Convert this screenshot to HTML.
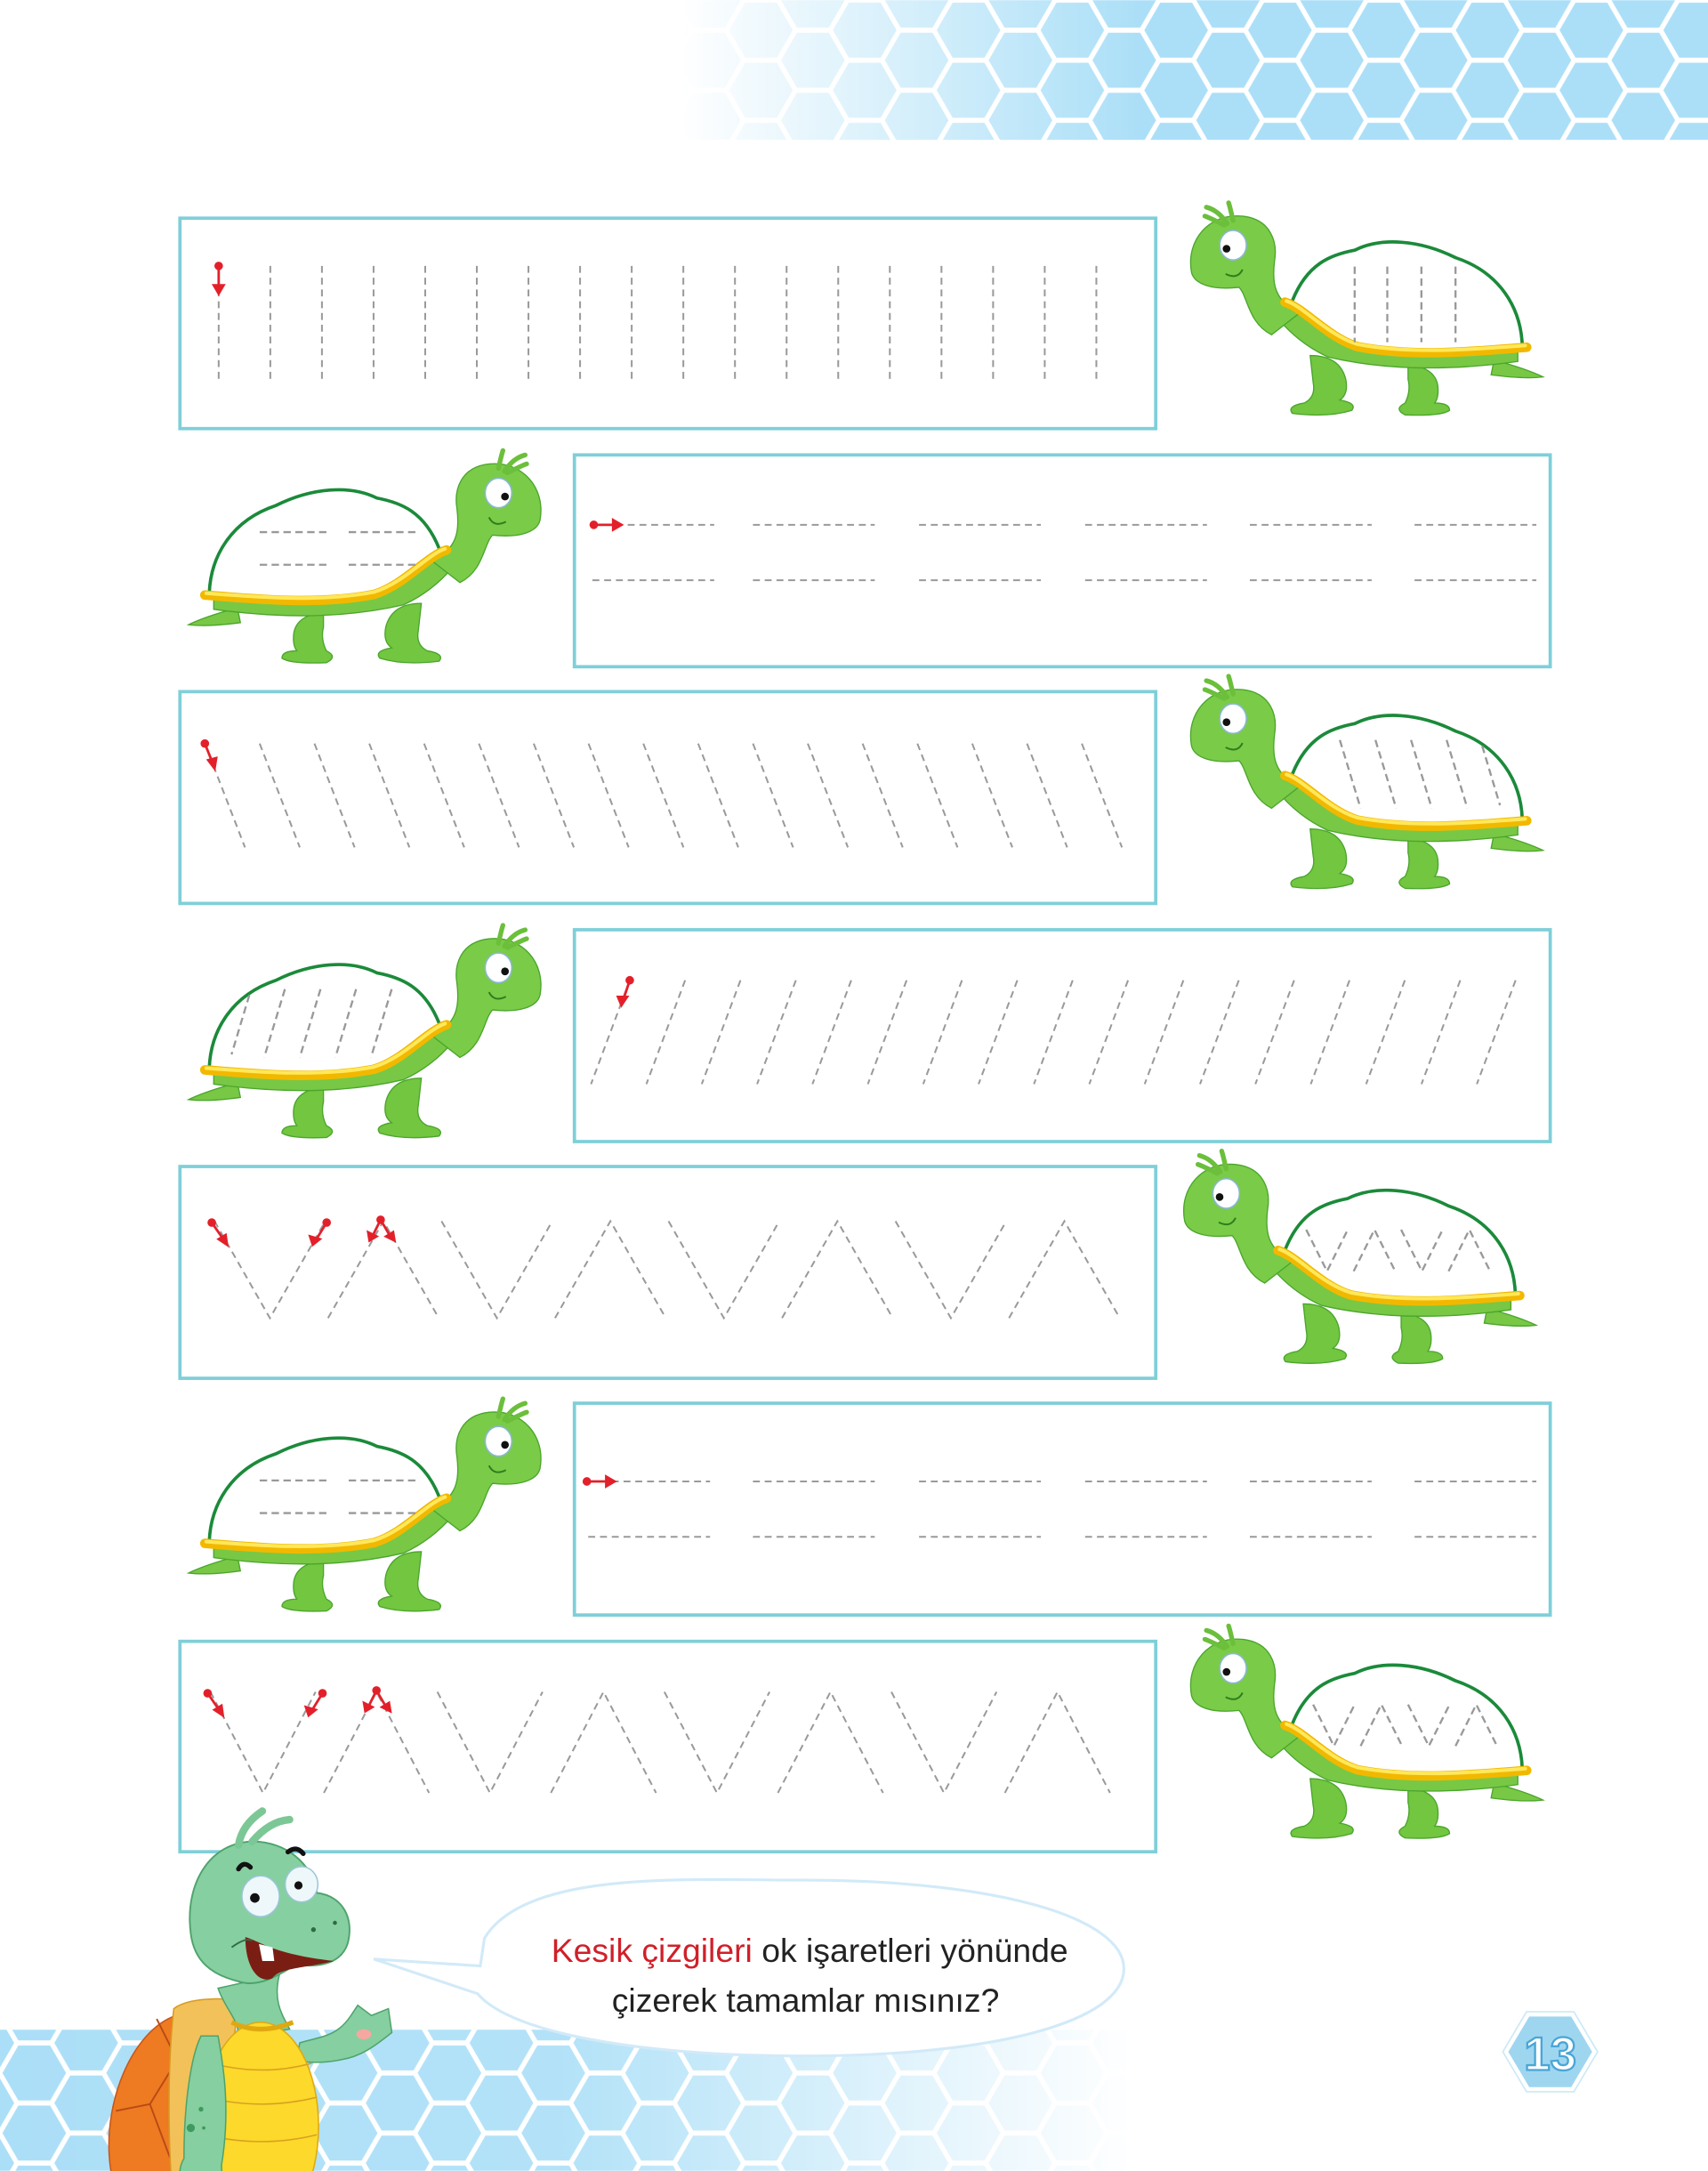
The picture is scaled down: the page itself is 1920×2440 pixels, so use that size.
<!DOCTYPE html>
<html><head><meta charset="utf-8"><style>
html,body{margin:0;padding:0;background:#fff;}
svg{display:block;}
</style></head><body>
<svg width="1920" height="2440" viewBox="0 0 1234 1568" xmlns="http://www.w3.org/2000/svg">
<defs>
<pattern id="hex" width="75" height="43.4" patternUnits="userSpaceOnUse">
<g fill="#abdff7">
<polygon points="1.75,21.7 13.25,1.8 36.25,1.8 47.75,21.7 36.25,41.6 13.25,41.6"/>
<polygon points="39.25,0 50.75,-19.9 73.75,-19.9 85.25,0 73.75,19.9 50.75,19.9"/>
<polygon points="39.25,43.4 50.75,23.5 73.75,23.5 85.25,43.4 73.75,63.3 50.75,63.3"/>
<polygon points="-35.75,0 -24.25,-19.9 -1.25,-19.9 10.25,0 -1.25,19.9 -24.25,19.9"/>
<polygon points="-35.75,43.4 -24.25,23.5 -1.25,23.5 10.25,43.4 -1.25,63.3 -24.25,63.3"/>
</g>
</pattern>
<linearGradient id="gTop" x1="0" x2="1" y1="0" y2="0">
<stop offset="0" stop-color="#fff" stop-opacity="0"/><stop offset="0.45" stop-color="#fff" stop-opacity="1"/><stop offset="1" stop-color="#fff"/>
</linearGradient>
<linearGradient id="gBot" x1="0" x2="1" y1="0" y2="0">
<stop offset="0" stop-color="#fff"/><stop offset="0.5" stop-color="#fff" stop-opacity="0.9"/><stop offset="1" stop-color="#fff" stop-opacity="0"/>
</linearGradient>
<mask id="mTop"><rect x="490" y="0" width="744" height="101" fill="url(#gTop)"/></mask>
<mask id="mBot"><rect x="0" y="1466" width="820" height="102" fill="url(#gBot)"/></mask>
<symbol id="turtle" viewBox="0 0 1320 780" overflow="visible">
<g stroke="#4aa52c" stroke-width="4">
<path d="M1080,555 Q1190,585 1245,612 Q1180,620 1070,605 Z" fill="#78c845"/>
<path d="M790,570 Q880,580 890,640 Q895,680 880,700 Q930,700 930,725 Q900,745 780,740 Q740,720 780,700 Q800,660 790,620 Z" fill="#72c640"/>
<path d="M460,540 Q560,540 580,620 Q590,670 560,690 Q620,700 600,725 Q520,750 400,735 Q380,710 440,700 Q480,680 470,630 Z" fill="#72c640"/>
<path d="M300,340 Q380,480 520,545 Q800,610 1160,560 L1160,520 L400,380 Z" fill="#78c845"/>
<path d="M60,260 C40,150 120,60 230,70 C330,80 350,160 340,220 C330,300 340,350 420,400 L330,470 C250,430 250,340 220,310 C130,320 70,300 60,260 Z" fill="#7acb47"/>
</g>
<path d="M180,95 Q150,50 110,40 M200,85 Q190,40 185,25 M170,100 Q120,75 105,70" stroke="#6bbf3b" stroke-width="16" fill="none" stroke-linecap="round"/>
<ellipse cx="200" cy="168" rx="45" ry="50" fill="#fff" stroke="#8ab8d0" stroke-width="5"/>
<circle cx="178" cy="180" r="13" fill="#111"/>
<path d="M175,265 Q215,285 232,250" stroke="#2e7d1e" stroke-width="6" fill="none"/>
<path d="M400,355 C450,230 530,200 610,185 C700,140 830,150 950,210 C1100,260 1170,380 1175,505 C1000,528 800,545 620,510 C520,480 440,380 380,360 Z" fill="#fff" stroke="#1b8a3a" stroke-width="11"/>
<path d="M375,360 C440,380 520,480 620,510 C800,545 1000,528 1190,512" stroke="#f2b800" stroke-width="32" fill="none" stroke-linecap="round"/>
<path d="M380,356 C440,376 520,472 620,502 C800,536 1000,520 1185,506" stroke="#ffe85a" stroke-width="12" fill="none" stroke-linecap="round"/>
</symbol>
</defs>

<rect x="490" y="0" width="744" height="101" fill="url(#hex)" mask="url(#mTop)"/>
<rect x="0" y="1466" width="820" height="102" fill="url(#hex)" mask="url(#mBot)"/>

<g fill="none" stroke="#7fcfd8" stroke-width="2.4">
<rect x="130" y="157.5" width="705" height="152"/>
<rect x="415" y="328.5" width="705" height="153"/>
<rect x="130" y="499.5" width="705" height="153"/>
<rect x="415" y="671.5" width="705" height="153"/>
<rect x="130" y="842.5" width="705" height="153"/>
<rect x="415" y="1013.5" width="705" height="153"/>
<rect x="130" y="1185.5" width="705" height="152"/>
</g>

<g fill="none" stroke="#9a9a9a" stroke-width="1.3" stroke-dasharray="5 3.5">
<path d="M158 192V275M195.3 192V275M232.6 192V275M269.9 192V275M307.2 192V275M344.5 192V275M381.8 192V275M419.1 192V275M456.4 192V275M493.7 192V275M531 192V275M568.3 192V275M605.6 192V275M642.9 192V275M680.2 192V275M717.5 192V275M754.8 192V275M792.1 192V275"/>
<path d="M428 379h88M544 379h88M664 379h88M784 379h88M903 379h88M1022 379h88M428 419h88M544 419h88M664 419h88M784 419h88M903 419h88M1022 419h88"/>
<path d="M148 537l29 75M187.6 537l29 75M227.2 537l29 75M266.8 537l29 75M306.4 537l29 75M346 537l29 75M385.6 537l29 75M425.2 537l29 75M464.8 537l29 75M504.4 537l29 75M544 537l29 75M583.6 537l29 75M623.2 537l29 75M662.8 537l29 75M702.4 537l29 75M742 537l29 75M781.6 537l29 75"/>
<path d="M455 708l-28 75M495 708l-28 75M535 708l-28 75M575 708l-28 75M615 708l-28 75M655 708l-28 75M695 708l-28 75M735 708l-28 75M775 708l-28 75M815 708l-28 75M855 708l-28 75M895 708l-28 75M935 708l-28 75M975 708l-28 75M1015 708l-28 75M1055 708l-28 75M1095 708l-28 75"/>
<path d="M155 882l40 70l40 -70M237 952l40 -70l40 70M319 882l40 70l40 -70M401 952l40 -70l40 70M483 882l40 70l40 -70M565 952l40 -70l40 70M647 882l40 70l40 -70M729 952l40 -70l40 70"/>
<path d="M425 1070h88M544 1070h88M664 1070h88M784 1070h88M903 1070h88M1022 1070h88M425 1110h88M544 1110h88M664 1110h88M784 1110h88M903 1110h88M1022 1110h88"/>
<path d="M152 1222l38 73l38 -73M234 1295l38 -73l38 73M316 1222l38 73l38 -73M398 1295l38 -73l38 73M480 1222l38 73l38 -73M562 1295l38 -73l38 73M644 1222l38 73l38 -73M726 1295l38 -73l38 73"/>
</g>

<g stroke="#e3202a" stroke-width="1.8" fill="#e3202a" stroke-linecap="round">
<circle cx="158" cy="192" r="2.2"/><path d="M158 192V210" fill="none"/><path d="M154.5 206L158 212L161.5 206Z"/>
<circle cx="429" cy="379" r="2.2"/><path d="M429 379H446" fill="none"/><path d="M443 375.5L449 379L443 382.5Z"/>
<circle cx="148" cy="537" r="2.2"/><path d="M148 537l6 15" fill="none"/><path d="M150.5 549l4.5 6l1.2-7.5Z"/>
<circle cx="455" cy="708" r="2.2"/><path d="M455 708l-5 15" fill="none"/><path d="M446.5 720l2.5 6l4-6Z"/>
<circle cx="153" cy="883" r="2.2"/><path d="M153 883l9 13" fill="none"/><path d="M158 895l6 4l-1-7Z"/>
<circle cx="236" cy="883" r="2.2"/><path d="M236 883l-8 13" fill="none"/><path d="M224 893l2 6l5-4Z"/>
<circle cx="275" cy="881" r="2.2"/><path d="M275 881l-6 12M275 881l7 12" fill="none"/><path d="M266 890l1 6l5-3Z"/><path d="M279 893l6 3l-1-6Z"/>
<circle cx="424" cy="1070" r="2.2"/><path d="M424 1070H441" fill="none"/><path d="M438 1066.5L444 1070L438 1073.5Z"/>
<circle cx="150" cy="1223" r="2.2"/><path d="M150 1223l9 13" fill="none"/><path d="M155 1235l6 4l-1-7Z"/>
<circle cx="233" cy="1223" r="2.2"/><path d="M233 1223l-8 13" fill="none"/><path d="M221 1233l2 6l5-4Z"/>
<circle cx="272" cy="1221" r="2.2"/><path d="M272 1221l-6 12M272 1221l7 12" fill="none"/><path d="M263 1230l1 6l5-3Z"/><path d="M276 1233l6 3l-1-6Z"/>
</g>

<g transform="translate(848,141) scale(0.2143)">
<use href="#turtle" width="1320" height="780"/>
<path d="M610 240V495M720 240V495M835 240V495M950 240V495" stroke="#999" stroke-width="7" stroke-dasharray="25 15" fill="none"/>
</g>
<g transform="translate(848,483) scale(0.2143)">
<use href="#turtle" width="1320" height="780"/>
<path d="M560 240l70 230M680 240l70 230M800 240l70 230M920 240l70 230M1040 260l60 200" stroke="#999" stroke-width="7" stroke-dasharray="25 15" fill="none"/>
</g>
<g transform="translate(843,826) scale(0.2143)">
<use href="#turtle" width="1320" height="780"/>
<path d="M470 290l70 140l70 -140M630 430l70 -140l70 140M790 290l70 140l70 -140M950 430l70 -140l70 140" stroke="#999" stroke-width="7" stroke-dasharray="25 15" fill="none"/>
</g>
<g transform="translate(848,1169) scale(0.2143)">
<use href="#turtle" width="1320" height="780"/>
<path d="M470 290l70 140l70 -140M630 430l70 -140l70 140M790 290l70 140l70 -140M950 430l70 -140l70 140" stroke="#999" stroke-width="7" stroke-dasharray="25 15" fill="none"/>
</g>
<g transform="translate(403,320) scale(-0.2143,0.2143)">
<use href="#turtle" width="1320" height="780"/>
<path d="M480 300h230M780 300h230M480 410h230M780 410h230" stroke="#999" stroke-width="7" stroke-dasharray="25 15" fill="none"/>
</g>
<g transform="translate(403,663) scale(-0.2143,0.2143)">
<use href="#turtle" width="1320" height="780"/>
<path d="M560 240l70 230M680 240l70 230M800 240l70 230M920 240l70 230M1040 260l60 200" stroke="#999" stroke-width="7" stroke-dasharray="25 15" fill="none"/>
</g>
<g transform="translate(403,1005) scale(-0.2143,0.2143)">
<use href="#turtle" width="1320" height="780"/>
<path d="M480 300h230M780 300h230M480 410h230M780 410h230" stroke="#999" stroke-width="7" stroke-dasharray="25 15" fill="none"/>
</g>

<path d="M350 1400 C380 1350 500 1358 580 1358 C720 1358 812 1385 812 1422 C812 1460 720 1485 580 1485 C470 1485 370 1470 345 1440 L270 1415 L347 1420 Z" fill="#fff" stroke="#d2eaf8" stroke-width="2"/>
<text x="585" y="1417" text-anchor="middle" font-family="Liberation Sans, sans-serif" font-size="24" fill="#222"><tspan fill="#d0202a">Kesik çizgileri</tspan> ok işaretleri yönünde</text>
<text x="582" y="1453" text-anchor="middle" font-family="Liberation Sans, sans-serif" font-size="24" fill="#222">çizerek tamamlar mısınız?</text>

<polygon points="1088,1482 1104,1455 1136,1455 1152,1482 1136,1509 1104,1509" fill="#9fd6ef" stroke="#fff" stroke-width="3"/>
<polygon points="1088,1482 1104,1455 1136,1455 1152,1482 1136,1509 1104,1509" fill="none" stroke="#cbe9f6" stroke-width="1" transform="translate(1120 1482) scale(1.07) translate(-1120 -1482)"/>
<text x="1120" y="1495" text-anchor="middle" font-family="Liberation Sans, sans-serif" font-weight="bold" font-size="34" fill="#fff" stroke="#4aa6d6" stroke-width="1.5">13</text>

<g transform="scale(0.6427) translate(0,2020) scale(0.383)">
<ellipse cx="520" cy="960" rx="195" ry="330" fill="#ee7a22" stroke="#c8561a" stroke-width="4" transform="rotate(10 520 960)"/>
<path d="M460 650 L520 770 L440 900 M520 770 L560 720" stroke="#b84a14" stroke-width="5" fill="none"/>
<path d="M340 920 L440 900 L500 1060" stroke="#b84a14" stroke-width="5" fill="none"/>
<path d="M510 620 C560 580 700 590 700 600 L620 1260 L520 1260 C490 1100 490 800 510 620 Z" fill="#f2c15a" stroke="#d89a20" stroke-width="4"/>
<path d="M640 560 C660 620 700 650 700 700 L850 680 C830 640 800 600 820 520 Z" fill="#86cfa0" stroke="#4ea36c" stroke-width="4"/>
<path d="M880 720 C950 700 990 700 1030 640 L1050 610 L1090 640 L1140 620 L1150 690 C1100 730 1060 760 1000 770 C950 780 900 780 870 770 Z" fill="#86cfa0" stroke="#4ea36c" stroke-width="4"/>
<ellipse cx="1068" cy="695" rx="22" ry="15" fill="#f4a8a0"/>
<ellipse cx="765" cy="965" rx="170" ry="305" fill="#fcd92a" stroke="#e0a810" stroke-width="4"/>
<path d="M620 780 Q770 820 915 780 M605 880 Q770 920 930 880 M600 990 Q770 1030 930 990 M610 1100 Q770 1140 920 1100" stroke="#d8a020" stroke-width="4" fill="none"/>
<path d="M680 660 Q760 700 860 660" stroke="#e0a810" stroke-width="14" fill="none"/>
<path d="M590 700 C560 760 540 900 540 1060 C520 1090 520 1160 560 1200 L560 1260 L660 1260 L650 1080 C680 900 650 760 640 700 Z" fill="#86cfa0" stroke="#4ea36c" stroke-width="4"/>
<circle cx="560" cy="970" r="12" fill="#3e9a5e"/><circle cx="590" cy="915" r="7" fill="#3e9a5e"/><circle cx="598" cy="970" r="5" fill="#3e9a5e"/>
<path d="M560 400 C540 250 620 120 760 130 C860 140 920 210 930 280 C1010 290 1040 360 1020 430 C1000 490 930 500 870 490 C820 520 760 560 700 540 C620 520 570 480 560 400 Z" fill="#86cfa0" stroke="#4ea36c" stroke-width="5"/>
<path d="M700 140 Q710 80 770 40 M740 130 Q790 70 850 65" stroke="#7cc796" stroke-width="22" fill="none" stroke-linecap="round"/>
<ellipse cx="765" cy="290" rx="55" ry="60" fill="#eef8fb" stroke="#9ac6d8" stroke-width="4"/>
<ellipse cx="885" cy="255" rx="48" ry="52" fill="#eef8fb" stroke="#9ac6d8" stroke-width="4"/>
<circle cx="748" cy="295" r="14" fill="#111"/><circle cx="876" cy="258" r="12" fill="#111"/>
<path d="M700 210 Q715 185 735 205 M845 160 Q870 140 890 165" stroke="#111" stroke-width="14" fill="none" stroke-linecap="round"/>
<circle cx="920" cy="388" r="7" fill="#2e6a44"/><circle cx="983" cy="368" r="6" fill="#2e6a44"/>
<path d="M720 410 C760 420 800 460 980 480 C900 500 820 500 800 530 C760 550 720 500 720 410 Z" fill="#7a1e14"/>
<path d="M760 430 L800 440 L805 480 L770 480 Z" fill="#fff"/>
<path d="M680 440 Q720 410 740 420" stroke="#2e6a44" stroke-width="5" fill="none"/>
</g>
</svg>
</body></html>
